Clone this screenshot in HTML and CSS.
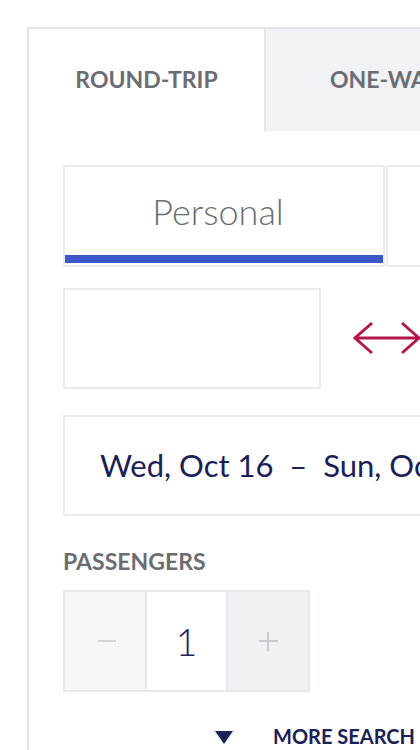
FILE: index.html
```html
<!DOCTYPE html>
<html>
<head>
<meta charset="utf-8">
<link rel="stylesheet" href="styles.css">
</head>
<body>
<div class="card">
  <div class="tabs">
    <div class="tab tab-active">ROUND-TRIP</div>
    <div class="tab tab-inactive">ONE-WAY</div>
  </div>
  <div class="content">
    <div class="mode-row">
      <div class="mode mode-active">
        <span class="mode-label">Personal</span>
        <span class="mode-bar"></span>
      </div>
      <div class="mode">
        <span class="mode-label">Business</span>
      </div>
    </div>
    <div class="route-row">
      <div class="airport"></div>
      <div class="swap">
        <svg width="68" height="34" viewBox="0 0 68 34">
          <path d="M1 17 H67 M19 2 L2 17 L19 32 M49 2 L66 17 L49 32" fill="none" stroke="#b5164b" stroke-width="3" stroke-linecap="butt" stroke-linejoin="miter"/>
        </svg>
      </div>
      <div class="airport"></div>
    </div>
    <div class="dates">Wed, Oct 16&nbsp;&nbsp;–&nbsp;&nbsp;Sun, Oct 20</div>
    <div class="label">PASSENGERS</div>
    <div class="stepper">
      <div class="step step-minus"><span class="minus-icon"></span></div>
      <div class="step step-value">1</div>
      <div class="step step-plus"><span class="plus-icon"></span></div>
    </div>
    <div class="more">
      <span class="caret"></span>
      <span class="more-text">MORE SEARCH OPTIONS</span>
    </div>
  </div>
</div>
</body>
</html>
```

FILE: styles.css
```css
html, body {
  margin: 0;
  padding: 0;
  width: 420px;
  height: 750px;
  overflow: hidden;
  background: #ffffff;
  font-family: Lato, "Open Sans", sans-serif;
}

.card {
  margin: 27px 0 0 27px;
  width: 620px;
  height: 900px;
  border: 2px solid #e6e6e8;
  box-sizing: border-box;
}

.tabs {
  display: flex;
  height: 102px;
}

.tab {
  display: flex;
  align-items: center;
  justify-content: center;
  font-weight: 700;
  font-size: 23px;
  color: #6b6d72;
  flex-shrink: 0;
  box-sizing: border-box;
  padding-bottom: 2px;
}

.tab-active {
  width: 235px;
  background: #ffffff;
}

.tab-inactive {
  width: 300px;
  background: #f0f2f6;
  border-left: 2px solid #e4e5e8;
  justify-content: flex-start;
  padding-left: 64px;
}

.content {
  padding: 34px 0 0 34px;
}

.mode-row {
  display: flex;
  gap: 1px;
}

.mode {
  position: relative;
  width: 322px;
  height: 102px;
  border: 2px solid #ebebed;
  box-sizing: border-box;
  display: flex;
  align-items: center;
  justify-content: center;
  padding: 0 12px 10px 0;
  flex-shrink: 0;
}

.mode-label {
  font-size: 36px;
  font-weight: 300;
  color: #6b6d72;
}

.mode-bar {
  position: absolute;
  left: 0;
  right: 0;
  bottom: 2px;
  height: 8px;
  background: #3b57c8;
}

.route-row {
  display: flex;
  align-items: center;
  margin-top: 21px;
}

.airport {
  width: 258px;
  height: 101px;
  border: 2px solid #ebebed;
  box-sizing: border-box;
  flex-shrink: 0;
}

.swap {
  width: 124px;
  display: flex;
  justify-content: center;
  padding: 0 0 2px 8px;
  box-sizing: border-box;
  flex-shrink: 0;
}

.dates {
  margin-top: 26px;
  width: 480px;
  height: 101px;
  border: 2px solid #ebebed;
  box-sizing: border-box;
  display: flex;
  align-items: center;
  padding-left: 35px;
  padding-bottom: 2px;
  font-size: 31px;
  font-weight: 400;
  color: #1b2057;
  white-space: nowrap;
}

.label {
  margin-top: 31px;
  font-size: 23px;
  font-weight: 700;
  color: #6b6d72;
  line-height: 28px;
}

.stepper {
  display: flex;
  margin-top: 15px;
  width: 247px;
  height: 102px;
  border: 2px solid #e8e8ea;
  box-sizing: border-box;
}

.step {
  flex: 1;
  display: flex;
  align-items: center;
  justify-content: center;
}

.step-minus {
  background: #f6f6f7;
}

.minus-icon {
  display: block;
  width: 18px;
  height: 2px;
  background: #d3d4d8;
  margin-left: 4px;
}

.step-value {
  background: #ffffff;
  border-left: 2px solid #e8e8ea;
  border-right: 2px solid #e8e8ea;
  color: #1b2057;
  font-size: 37px;
  font-weight: 300;
}

.step-plus {
  background: #eff1f5;
}

.plus-icon {
  position: relative;
  display: block;
  width: 19px;
  height: 19px;
}

.plus-icon::before,
.plus-icon::after {
  content: "";
  position: absolute;
  background: #c9cacf;
}

.plus-icon::before {
  left: 0;
  right: 0;
  top: 8px;
  height: 2px;
}

.plus-icon::after {
  top: 0;
  bottom: 0;
  left: 8px;
  width: 2px;
}

.more {
  display: flex;
  align-items: center;
  margin-top: 32px;
  padding-left: 152px;
}

.caret {
  width: 0;
  height: 0;
  border-left: 9px solid transparent;
  border-right: 9px solid transparent;
  border-top: 13px solid #1b2057;
  margin-top: 3px;
}

.more-text {
  margin-left: 40px;
  font-size: 20px;
  font-weight: 700;
  color: #1b2057;
  white-space: nowrap;
}
```
